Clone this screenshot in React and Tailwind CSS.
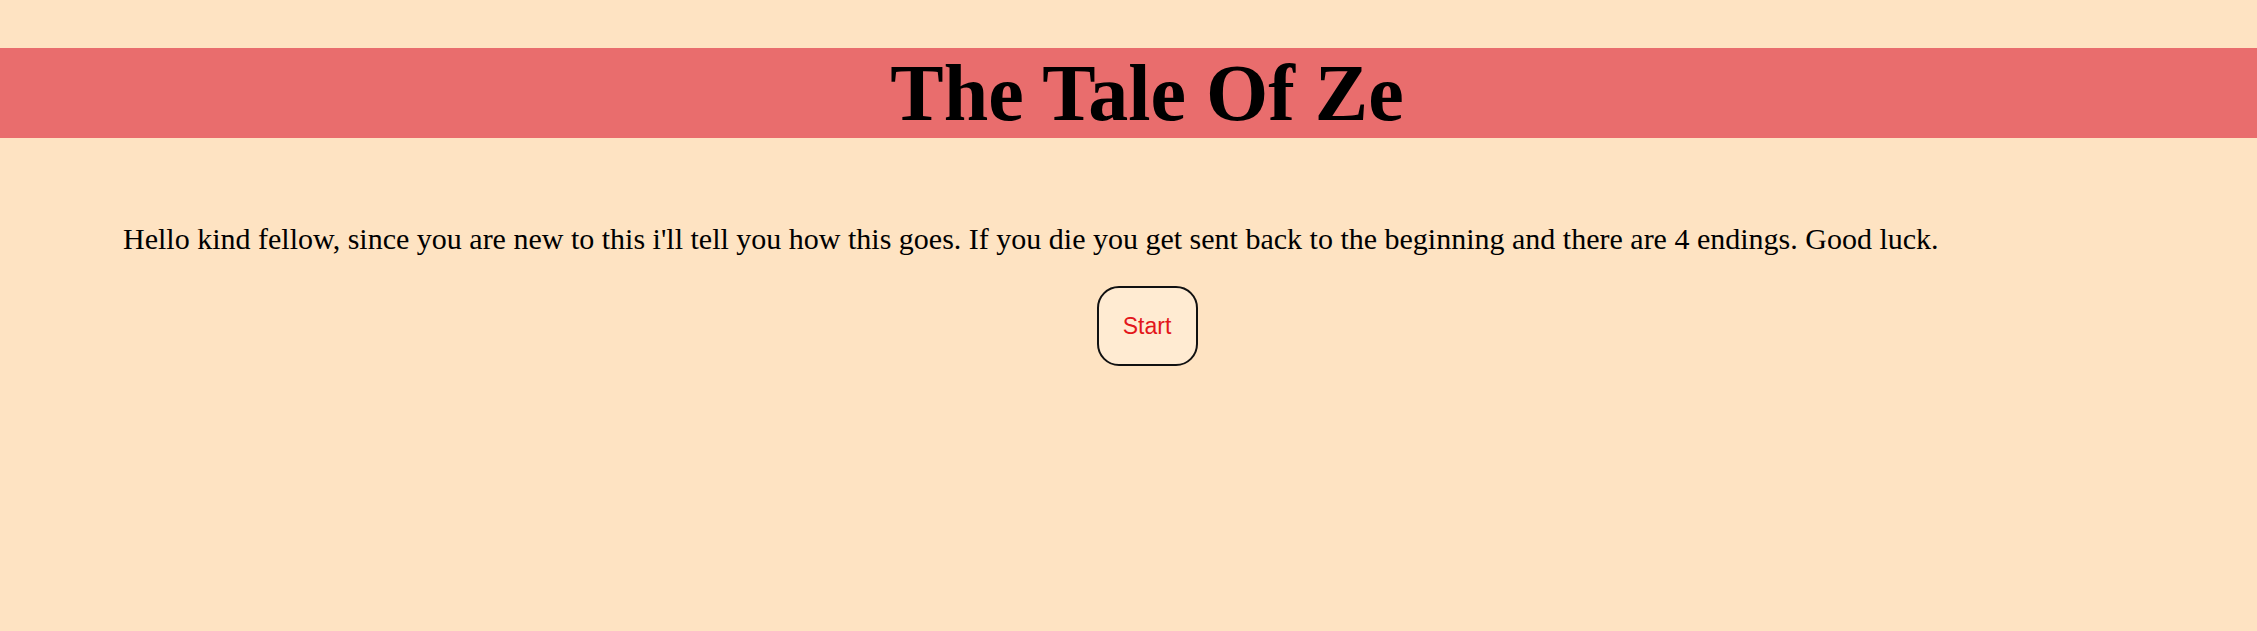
export default function App() {
  return (
    <div className="min-h-[631px] w-full bg-[#fee3c2] overflow-hidden">
      <div className="mt-[48px] h-[90px] bg-[#e96d6d] flex items-center justify-center pl-[37px]">
        <h1 className="text-[80px] leading-[90px] font-bold text-black" style={{ fontFamily: '"Liberation Serif", "Times New Roman", serif' }}>
          The Tale Of Ze
        </h1>
      </div>
      <p className="mt-[84px] pl-[123px] text-[30px] leading-[34px] text-black" style={{ fontFamily: '"Liberation Serif", "Times New Roman", serif' }}>
        Hello kind fellow, since you are new to this i'll tell you how this goes. If you die you get sent back to the beginning and there are 4 endings. Good luck.
      </p>
      <div className="mt-[30px] flex justify-center pl-[37px]">
        <button className="w-[101px] h-[80px] rounded-[22px] border-2 border-[#111111] bg-[#ffebd2] text-[23px] text-[#e3161b]" style={{ fontFamily: '"Liberation Sans", Arial, sans-serif' }}>
          Start
        </button>
      </div>
    </div>
  );
}
